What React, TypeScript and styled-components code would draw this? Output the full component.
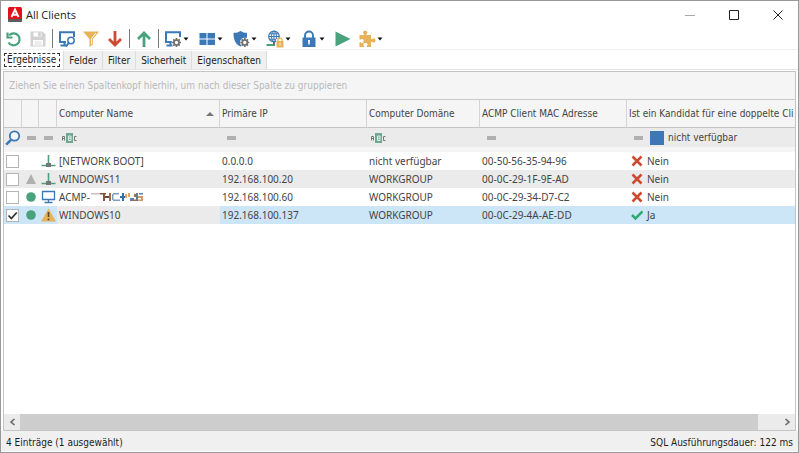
import React from 'react';
import styled, { createGlobalStyle } from 'styled-components';

const BLUE = '#3b78b5';
const GREEN = '#4aa27c';
const SAND = '#e8b25a';
const RED = '#cc4b30';

const GlobalStyle = createGlobalStyle`
  *, *::before, *::after { box-sizing: border-box; }
  body {
    margin: 0;
    font: 10px/16px "DejaVu Sans Condensed", "DejaVu Sans", Tahoma, sans-serif;
    color: #1c1c1c;
  }
  button, input {
    font: inherit;
    color: inherit;
    margin: 0;
    padding: 0;
    border: 0;
    background: none;
  }
  svg { display: block; flex: none; }
`;

const Window = styled.main`
  display: flex;
  flex-direction: column;
  height: 100vh;
  background: #fff;
  border: 1px solid #999;
  overflow: hidden;
`;

const TitleBar = styled.header`
  display: flex;
  align-items: center;
  gap: 4px;
  height: 27px;
  flex: none;
  padding-left: 7px;
`;

const Title = styled.h1`
  flex: 1;
  margin: 0;
  font: 400 11px/16px "Open Sans", sans-serif;
  color: #222;
`;

const CaptionButton = styled.button`
  display: flex;
  align-items: center;
  justify-content: center;
  width: 40px;
  height: 24px;
`;

const Toolbar = styled.div`
  display: flex;
  align-items: center;
  height: 22px;
  flex: none;
  padding-left: 1px;
  border-bottom: 1px solid #f0f0f0;
`;

const ToolButton = styled.button`
  display: flex;
  align-items: center;
  justify-content: center;
  width: 24px;
  height: 20px;
`;

const DropButton = styled.button`
  display: flex;
  align-items: center;
  gap: 1px;
  width: 34px;
  height: 20px;
  padding-left: 3px;
`;

const Separator = styled.span`
  width: 1px;
  height: 19px;
  margin: 0 2px;
  background: #777;
`;

const TabStrip = styled.div`
  display: flex;
  height: 20px;
  flex: none;
  padding: 1px 1px 0;
  border-bottom: 1px solid #e4e4e4;
`;

const Tab = styled.button<{ $active?: boolean }>`
  display: flex;
  align-items: center;
  padding: ${(p) => (p.$active ? '0 3px 0 2px' : '1px 5px 0')};
  border-right: 1px solid #dcdcdc;
  background: ${(p) => (p.$active ? '#fff' : '#f0f0f0')};
  line-height: 16px;

  span {
    line-height: 12px;
    border: ${(p) => (p.$active ? '1px dashed #333' : '0')};
    padding: ${(p) => (p.$active ? '0 3px 0 2px' : '0')};
  }
`;

const Grid = styled.section`
  display: flex;
  flex-direction: column;
  flex: 1;
  min-height: 0;
  margin: 1px 2px 0;
  border: 1px solid #c4c4c4;
`;

const GroupHint = styled.div`
  height: 28px;
  flex: none;
  padding: 6px 5px 0;
  background: #f5f5f5;
  border-bottom: 1px solid #c8c8c8;
  color: #b9b9b9;
`;

const TableArea = styled.div`
  flex: 1;
  min-height: 0;
  overflow: hidden;
`;

const Table = styled.table`
  width: 100%;
  table-layout: fixed;
  border-collapse: separate;
  border-spacing: 0;
  color: #444;
`;

const Col = styled.col<{ $w?: number }>`
  width: ${(p) => (p.$w ? `${p.$w}px` : 'auto')};
`;

const HeadCell = styled.th`
  height: 28px;
  padding: 0 2px;
  background: #f5f5f5;
  border-right: 1px solid #d4d4d4;
  border-bottom: 1px solid #c4c4c4;
  font-weight: 400;
  text-align: left;
  white-space: nowrap;
  overflow: hidden;

  &:last-child { border-right: 0; }
`;

const HeadLabel = styled.span`
  display: flex;
  align-items: center;
  justify-content: space-between;
  padding-right: 3px;
`;

const FilterCell = styled.td<{ $pad?: number }>`
  height: 24px;
  padding: 0 0 0 ${(p) => p.$pad ?? 3}px;
  background: #ebebeb;
  border-bottom: 5px solid #f5f5f5;
`;

const FilterLine = styled.div`
  display: flex;
  align-items: center;
  height: 18px;
`;

const FilterLabel = styled.label`
  display: flex;
  align-items: center;
  gap: 4px;
  margin-left: 7px;
`;

const BlueCheck = styled.input`
  appearance: none;
  width: 14px;
  height: 14px;
  background: ${BLUE};
`;

const Operator = styled.button`
  display: flex;
  align-items: center;
`;

const Row = styled.tr<{ $selected?: boolean }>`
  background: #fff;

  &:nth-child(even) { background: #ebebeb; }

  td {
    background: ${(p) => (p.$selected ? '#cce5f7' : 'transparent')};
  }
  td.name { background: transparent; }
`;

const Cell = styled.td`
  height: 18px;
  padding: 0 2px;
  font-family: "Noto Sans", Tahoma, sans-serif;
  line-height: 16px;
  white-space: nowrap;
`;

const Inline = styled.span<{ $gap?: number; $pad?: number }>`
  display: flex;
  align-items: center;
  gap: ${(p) => p.$gap ?? 0}px;
  padding-left: ${(p) => p.$pad ?? 0}px;
`;

const CheckBox = styled.input`
  appearance: none;
  display: block;
  width: 13px;
  height: 13px;
  background: #fff;
  border: 1px solid #b4b4b4;

  &:checked {
    background: #fff url("data:image/svg+xml,%3Csvg xmlns='http://www.w3.org/2000/svg' viewBox='0 0 11 11'%3E%3Cpath d='M1.5 5.5l2.8 3L9.8 2.5' fill='none' stroke='%23333' stroke-width='1.8'/%3E%3C/svg%3E");
  }
`;

const ScrollBar = styled.div`
  display: flex;
  height: 16px;
  flex: none;
  background: #ebebeb;
`;

const ScrollArrow = styled.button`
  display: flex;
  align-items: center;
  justify-content: center;
  width: 16px;
`;

const Thumb = styled.div`
  flex: 1;
  margin-right: 21px;
  background: #cdcdcd;
`;

const StatusBar = styled.footer`
  display: flex;
  align-items: center;
  justify-content: space-between;
  height: 21px;
  flex: none;
  padding: 3px 5px 0;
  background: #f0f0f0;
  border-bottom: 1px solid #fff;
`;

const Svg = ({ w = 18, h = 18, children }: { w?: number; h?: number; children: React.ReactNode }) => (
  <svg width={w} height={h} viewBox={`0 0 ${w} ${h}`} fill="none" aria-hidden="true">
    {children}
  </svg>
);

const AppLogo = () => (
  <Svg w={14} h={15}>
    <rect width="14" height="15" rx="1.5" fill="#e2101b" />
    <path d="M0 12h14v1.5a1.5 1.5 0 0 1-1.5 1.5h-11A1.5 1.5 0 0 1 0 13.5z" fill="#5d5d5d" />
    <path d="M3.500 10L7 2.500l3.500 7.500M4.900 7.700h4.200" stroke="#fff" strokeWidth="1.900" />
  </Svg>
);

const Caret = () => (
  <Svg w={6} h={4}>
    <path d="M0.500 0.500h5L3 3.500z" fill="#111" />
  </Svg>
);

const Gear = ({ x, y }: { x: number; y: number }) => (
  <g transform={`translate(${x} ${y})`}>
    <circle r="4.800" fill="#fff" />
    <g stroke="#6e6e6e" strokeWidth="1.700">
      <path d="M0-4.500V4.500M-4.500 0H4.500M-3.200-3.200L3.200 3.200M3.200-3.200L-3.200 3.200" />
    </g>
    <circle r="2.500" fill="#fff" stroke="#6e6e6e" strokeWidth="1.600" />
  </g>
);

const UndoIcon = () => (
  <Svg>
    <path d="M4.200 5.200A6 6 0 1 1 3.500 12.500" stroke={GREEN} strokeWidth="2.200" />
    <path d="M2.500 2.500v5h5" stroke={GREEN} strokeWidth="2.200" />
  </Svg>
);
const SaveIcon = () => (
  <Svg>
    <path d="M1.500 1.500h12l3 3v12h-15z" fill="#d2d2d2" />
    <path d="M4.500 2.500h8v4h-8zM4 10h10v5.500H4z" fill="#fff" />
    <path d="M9.500 2.500h2v3.500h-2zM5.500 12h7M5.500 14h7" fill="#d2d2d2" stroke="#d2d2d2" strokeWidth="0.800" />
  </Svg>
);
const Monitor = () => (
  <path d="M8 12H2V2.200h14V7M6.500 12v3.500M2.500 15.500h6" stroke={BLUE} strokeWidth="2" />
);
const MonitorSearchIcon = () => (
  <Svg>
    <Monitor />
    <circle cx="13" cy="10.500" r="3.200" fill="#fff" stroke={BLUE} strokeWidth="1.500" />
    <path d="M10.800 12.800L8 16.500" stroke={BLUE} strokeWidth="2" />
  </Svg>
);
const MonitorGearIcon = () => (
  <Svg>
    <Monitor />
    <Gear x={12.5} y={12.5} />
  </Svg>
);
const FunnelIcon = () => (
  <Svg>
    <path d="M1 1.500h16l-6 7.500v5.500L7.500 17V9z" fill={SAND} />
    <path d="M13.800 3L9.700 8.300v6" stroke="#fff" strokeWidth="1" />
  </Svg>
);
const ArrowIcon = ({ up, color }: { up?: boolean; color: string }) => (
  <Svg>
    <g transform={up ? 'rotate(180 9 9)' : undefined} stroke={color} strokeWidth="2.800">
      <path d="M9 1v14M3 9l6 6 6-6" />
    </g>
  </Svg>
);
const TilesIcon = () => (
  <Svg>
    <path d="M1.500 3h7v5.500h-7zM9.500 3h7.500v5.500H9.500zM1.500 9.500h7V15h-7zM9.500 9.500h7.500V15H9.500z" fill={BLUE} />
  </Svg>
);
const ShieldIcon = () => (
  <Svg>
    <path d="M8.500 1c2.500 1.500 4.500 2 6.500 1.800C15.500 9 13.500 14 8.500 16.500 3 14 1.500 9 1.500 2.800 4 3 6 2.500 8.500 1z" fill={BLUE} />
    <Gear x={12.8} y={12.5} />
  </Svg>
);
const GlobeLockIcon = () => (
  <Svg>
    <circle cx="8" cy="6.500" r="5.300" stroke={BLUE} strokeWidth="1.200" />
    <ellipse cx="8" cy="6.500" rx="2.500" ry="5.300" stroke={BLUE} />
    <path d="M2.700 6.500h10.600M3.800 3.800h8.400M3.800 9.200h8.400M8 1v11" stroke={BLUE} />
    <path d="M0.500 15h8.500" stroke={GREEN} strokeWidth="2" />
    <path d="M8 12v3" stroke="#6e6e6e" strokeWidth="2" />
    <path d="M10 9h8v8.500h-8z" fill="#fff" />
    <path d="M12 11V9.800a2 2 0 0 1 4 0V11" stroke={SAND} strokeWidth="1.300" />
    <path d="M10.500 11h7v6.500h-7z" fill={SAND} />
    <path d="M14 12.800v2.700" stroke="#fff" />
  </Svg>
);
const LockIcon = () => (
  <Svg>
    <path d="M5 8V5.500a4 4 0 0 1 8 0V8" stroke={BLUE} strokeWidth="1.900" />
    <path d="M2.500 7.500h13v9.500h-13z" fill={BLUE} />
    <path d="M9 10v4.500M8 11h2" stroke="#fff" strokeWidth="1.500" />
  </Svg>
);
const PlayIcon = () => (
  <Svg>
    <path d="M1.500 1.500L16.500 9 1.500 16.500z" fill={GREEN} />
  </Svg>
);
const PuzzleIcon = () => (
  <Svg>
    <path
      d="M1.500 5H6C6.800 4 5 3.400 5 2.500 5 1.300 6 0.800 7.200 0.800s2.200 0.600 2.200 1.700C9.400 3.400 7.700 4 8.500 5H13v4c1 0.800 1.500-0.700 2.600-0.700 1.200 0 1.900 0.900 1.900 2.100s-0.700 2.100-1.900 2.100C14.500 12.500 14 11.200 13 12v5H9c-1-0.800 0.600-1.500 0.600-2.500S8.500 13 7.400 13s-2.100 0.500-2.100 1.500S6.800 16.200 5.800 17H1.500v-4.500c0.800-1 1.600 0.400 2.600 0.400 1.100 0 1.600-0.900 1.600-1.900S5.100 9.100 4.100 9.100c-1 0-1.800 1.300-2.600 0.400z"
      fill={SAND}
    />
  </Svg>
);
const SearchIcon = () => (
  <Svg w={16} h={16}>
    <circle cx="9.500" cy="6" r="4.700" fill="#f6f8fb" stroke={BLUE} strokeWidth="1.800" />
    <path d="M6 9.800L1.200 14.600" stroke={BLUE} strokeWidth="2.500" />
  </Svg>
);
const DashIcon = () => (
  <Svg w={9} h={4}>
    <path d="M0 0h9v4H0z" fill="#b0b0b0" />
  </Svg>
);
const ContainsIcon = () => (
  <Svg w={15} h={10}>
    <path d="M4 0h7v10H4z" fill="#6fa893" />
    <path d="M0.500 7.500v-4h2v4M0.500 5.500h2M14.500 3.500h-2v4h2" stroke="#777" />
    <path d="M6.500 3h2.500v4.500H6.500zM6.500 5.200H9" stroke="#e3efea" />
  </Svg>
);
const NetworkIcon = () => (
  <Svg w={15} h={14}>
    <path d="M7.500 1v9M0.500 11.500h14" stroke={GREEN} strokeWidth="1.600" />
    <path d="M5 9h5v4H5z" fill="#757575" />
  </Svg>
);
const PcIcon = () => (
  <Svg w={15} h={14}>
    <path d="M1.500 1.500h12v8h-12zM7.500 10v2M3.500 12.500h8" stroke={BLUE} strokeWidth="1.300" />
  </Svg>
);
const WarnIcon = () => (
  <Svg w={15} h={14}>
    <path d="M7.500 0.500L15 13.500H0z" fill={SAND} />
    <path d="M7.500 4v5M7.500 10.500v1.700" stroke="#5a4a2a" strokeWidth="1.700" />
  </Svg>
);
const DotIcon = () => (
  <Svg w={10} h={10}>
    <circle cx="5" cy="5" r="4.800" fill={GREEN} />
  </Svg>
);
const TriangleIcon = () => (
  <Svg w={10} h={10}>
    <path d="M5 0l5 10H0z" fill="#b0b0b0" />
  </Svg>
);
const CrossIcon = () => (
  <Svg w={12} h={12}>
    <path d="M1.500 1.500l9 9M10.500 1.500l-9 9" stroke={RED} strokeWidth="2.500" />
  </Svg>
);
const TickIcon = () => (
  <Svg w={12} h={12}>
    <path d="M1 6l3.500 3.500L11.500 2.500" stroke="#2faa72" strokeWidth="2.500" />
  </Svg>
);
const MaskedName = () => (
  <Svg w={53} h={10}>
    <path d="M0 1h9v1.500H0z" fill="#c9c0b8" />
    <path d="M9 1h6v1.500H9zM12 1h2v8h-2z" fill="#8a5340" />
    <path d="M14 4h6v2h-6z" fill="#5d4a44" />
    <path d="M18 1h2v8h-2z" fill="#a56a4a" />
    <path d="M22 1h6v1.500h-6zM22 7.500h7V9h-7zM21 2h1.500v6H21z" fill="#7d9fc0" />
    <path d="M29 4h5v2h-5zM31 1h2v8h-2z" fill="#2f6fae" />
    <path d="M34 2h2v4h-2zM37 1h2v4h-2z" fill="#e0a868" />
    <path d="M39 6h4v3h-4z" fill="#4c8bc4" />
    <path d="M43 2h2v3h-2zM40 7.500h7V9h-7z" fill="#a56a4a" />
    <path d="M45 1h2v8h-2zM48 1h4v1.500h-4z" fill="#5f7f9c" />
    <path d="M47 4h5v2h-5zM50 5h2v3h-2zM47 7.500h5V9h-5z" fill="#d09a62" />
  </Svg>
);

const columns = [
  { label: 'Primäre IP' },
  { label: 'Computer Domäne' },
  { label: 'ACMP Client MAC Adresse' },
  { label: 'Ist ein Kandidat für eine doppelte Cli' },
];

type Client = {
  name: string;
  masked?: boolean;
  state?: React.ReactNode;
  kind: React.ReactNode;
  ip: string;
  domain: string;
  mac: string;
  duplicate?: boolean;
};

const clients: Client[] = [
  { name: '[NETWORK BOOT]', kind: <NetworkIcon />, ip: '0.0.0.0', domain: 'nicht verfügbar', mac: '00-50-56-35-94-96' },
  { name: 'WINDOWS11', state: <TriangleIcon />, kind: <NetworkIcon />, ip: '192.168.100.20', domain: 'WORKGROUP', mac: '00-0C-29-1F-9E-AD' },
  { name: 'ACMP-', masked: true, state: <DotIcon />, kind: <PcIcon />, ip: '192.168.100.60', domain: 'WORKGROUP', mac: '00-0C-29-34-D7-C2' },
  { name: 'WINDOWS10', state: <DotIcon />, kind: <WarnIcon />, ip: '192.168.100.137', domain: 'WORKGROUP', mac: '00-0C-29-4A-AE-DD', duplicate: true },
];

const dropTools = [
  { label: 'Client-Aktionen', icon: <MonitorGearIcon /> },
  { label: 'Ansicht', icon: <TilesIcon /> },
  { label: 'Schutz', icon: <ShieldIcon /> },
  { label: 'Netzwerk', icon: <GlobeLockIcon /> },
  { label: 'Sperren', icon: <LockIcon /> },
];

export default function App() {
  const [checked, setChecked] = React.useState<string[]>(['WINDOWS10']);
  const [tab, setTab] = React.useState('Ergebnisse');
  const toggle = (name: string) =>
    setChecked((list) => (list.includes(name) ? list.filter((n) => n !== name) : [...list, name]));

  return (
    <>
      <GlobalStyle />
      <Window>
        <TitleBar>
          <AppLogo />
          <Title>All Clients</Title>
          <CaptionButton aria-label="Minimieren">
            <Svg w={10} h={10}><path d="M0 5.500h10" stroke="#aaa" /></Svg>
          </CaptionButton>
          <CaptionButton aria-label="Maximieren">
            <Svg w={10} h={10}><path d="M0.500 0.500h9v9h-9z" stroke="#222" /></Svg>
          </CaptionButton>
          <CaptionButton aria-label="Schließen">
            <Svg w={10} h={10}><path d="M0.500 0.500l9 9M9.500 0.500l-9 9" stroke="#222" /></Svg>
          </CaptionButton>
        </TitleBar>

        <Toolbar role="toolbar">
          <ToolButton aria-label="Aktualisieren"><UndoIcon /></ToolButton>
          <ToolButton aria-label="Speichern" disabled><SaveIcon /></ToolButton>
          <Separator />
          <ToolButton aria-label="Suchen"><MonitorSearchIcon /></ToolButton>
          <ToolButton aria-label="Filtern"><FunnelIcon /></ToolButton>
          <ToolButton aria-label="Nach unten"><ArrowIcon color={RED} /></ToolButton>
          <Separator />
          <ToolButton aria-label="Nach oben"><ArrowIcon up color={GREEN} /></ToolButton>
          <Separator />
          {dropTools.map((t) => (
            <DropButton key={t.label} aria-label={t.label}>{t.icon}<Caret /></DropButton>
          ))}
          <ToolButton aria-label="Ausführen"><PlayIcon /></ToolButton>
          <DropButton aria-label="Erweiterungen"><PuzzleIcon /><Caret /></DropButton>
        </Toolbar>

        <TabStrip role="tablist">
          {['Ergebnisse', 'Felder', 'Filter', 'Sicherheit', 'Eigenschaften'].map((t) => (
            <Tab key={t} role="tab" aria-selected={t === tab} $active={t === tab} onClick={() => setTab(t)}>
              <span>{t}</span>
            </Tab>
          ))}
        </TabStrip>

        <Grid>
          <GroupHint>Ziehen Sie einen Spaltenkopf hierhin, um nach dieser Spalte zu gruppieren</GroupHint>
          <TableArea>
            <Table>
              <colgroup>
                <Col $w={18} />
                <Col $w={17} />
                <Col $w={18} />
                <Col $w={163} />
                <Col $w={147} />
                <Col $w={113} />
                <Col $w={147} />
                <Col />
              </colgroup>
              <thead>
                <tr>
                  <HeadCell />
                  <HeadCell />
                  <HeadCell />
                  <HeadCell>
                    <HeadLabel>
                      Computer Name
                      <Svg w={8} h={4}><path d="M4 0l4 4H0z" fill="#777" /></Svg>
                    </HeadLabel>
                  </HeadCell>
                  {columns.map((c) => <HeadCell key={c.label}>{c.label}</HeadCell>)}
                </tr>
                <tr>
                  <FilterCell $pad={1}><FilterLine><SearchIcon /></FilterLine></FilterCell>
                  <FilterCell $pad={5}><FilterLine><Operator aria-label="Operator Status"><DashIcon /></Operator></FilterLine></FilterCell>
                  <FilterCell $pad={5}><FilterLine><Operator aria-label="Operator Typ"><DashIcon /></Operator></FilterLine></FilterCell>
                  <FilterCell $pad={5}><FilterLine><Operator aria-label="Operator Name"><ContainsIcon /></Operator></FilterLine></FilterCell>
                  <FilterCell $pad={7}><FilterLine><Operator aria-label="Operator IP"><DashIcon /></Operator></FilterLine></FilterCell>
                  <FilterCell $pad={4}><FilterLine><Operator aria-label="Operator Domäne"><ContainsIcon /></Operator></FilterLine></FilterCell>
                  <FilterCell $pad={7}><FilterLine><Operator aria-label="Operator MAC"><DashIcon /></Operator></FilterLine></FilterCell>
                  <FilterCell $pad={7}>
                    <FilterLine>
                      <Operator aria-label="Operator Kandidat"><DashIcon /></Operator>
                      <FilterLabel><BlueCheck type="checkbox" />nicht verfügbar</FilterLabel>
                    </FilterLine>
                  </FilterCell>
                </tr>
              </thead>
              <tbody>
                {clients.map((c) => (
                  <Row key={c.name} $selected={checked.includes(c.name)}>
                    <Cell>
                      <CheckBox
                        type="checkbox"
                        aria-label={c.name}
                        checked={checked.includes(c.name)}
                        onChange={() => toggle(c.name)}
                      />
                    </Cell>
                    <Cell><Inline $pad={2}>{c.state}</Inline></Cell>
                    <Cell><Inline>{c.kind}</Inline></Cell>
                    <Cell className="name">
                      <Inline $gap={1}>{c.name}{c.masked && <MaskedName />}</Inline>
                    </Cell>
                    <Cell>{c.ip}</Cell>
                    <Cell>{c.domain}</Cell>
                    <Cell>{c.mac}</Cell>
                    <Cell>
                      <Inline $gap={4} $pad={2}>
                        {c.duplicate ? <TickIcon /> : <CrossIcon />}
                        {c.duplicate ? 'Ja' : 'Nein'}
                      </Inline>
                    </Cell>
                  </Row>
                ))}
              </tbody>
            </Table>
          </TableArea>
          <ScrollBar>
            <ScrollArrow aria-label="Nach links">
              <Svg w={7} h={8}><path d="M5.500 1L2 4l3.500 3" stroke="#666" strokeWidth="1.600" /></Svg>
            </ScrollArrow>
            <Thumb />
            <ScrollArrow aria-label="Nach rechts">
              <Svg w={7} h={8}><path d="M1.500 1L5 4 1.500 7" stroke="#666" strokeWidth="1.600" /></Svg>
            </ScrollArrow>
          </ScrollBar>
        </Grid>

        <StatusBar>
          <span>4 Einträge (1 ausgewählt)</span>
          <span>SQL Ausführungsdauer: 122 ms</span>
        </StatusBar>
      </Window>
    </>
  );
}
